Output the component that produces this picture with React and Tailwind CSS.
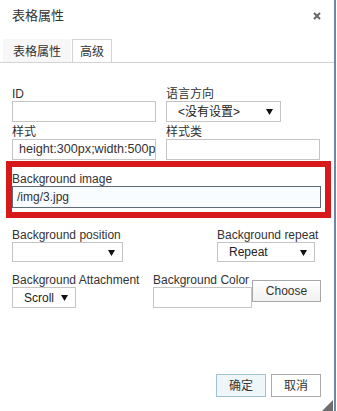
import React from "react";

function Caret() {
  return (
    <svg width="7" height="7" viewBox="0 0 7 7" className="shrink-0">
      <polygon points="0,1 7,1 3.5,7" fill="#111" />
    </svg>
  );
}

function Select({ value, className }) {
  return (
    <div
      className={
        "flex items-center justify-between border border-[#c4c4c4] bg-white pl-[11px] pr-[7px] text-[12px] leading-[14px] text-[#222] " +
        className
      }
    >
      <span>{value}</span>
      <Caret />
    </div>
  );
}

export default function App() {
  return (
    <div className="w-[337px] h-[411px] bg-white font-['Liberation_Sans','Noto_Sans_CJK_SC',sans-serif] text-[#333]">
      <div className="relative w-[336px] h-[411px] border-r-2 border-[#6f86a6] overflow-hidden">
        {/* Título */}
        <div className="flex h-[31px] items-center justify-between pl-[12px] pr-[13px]">
          <span className="text-[13px] leading-[16px] text-[#333]">表格属性</span>
          <svg width="8" height="8" viewBox="0 0 8 8">
            <path d="M1 1 L7 7 M7 1 L1 7" stroke="#666" strokeWidth="2" />
          </svg>
        </div>

        {/* Pestañas */}
        <div className="mt-[8px] flex h-[24px] border-b border-[#d3d3d3] text-[12px] leading-[14px]">
          <div className="ml-[3px] bg-[#f7f7f7] px-[10px] pt-[6px] text-[#333]">表格属性</div>
          <div className="ml-[1px] border border-b-0 border-[#d3d3d3] bg-white px-[7px] pt-[5px] text-[#333]">
            高级
          </div>
        </div>

        {/* ID / 语言方向 / 样式 / 样式类 */}
        <div className="mt-[24px] flex gap-[10px] px-[12px] text-[12px] leading-[14px]">
          <div className="flex w-[144px] flex-col">
            <span className="h-[14px]">ID</span>
            <div className="h-[21px] border border-[#c4c4c4] bg-white" />
            <span className="mt-[3px] h-[14px]">样式</span>
            <div className="h-[21px] overflow-hidden whitespace-nowrap border border-[#c4c4c4] bg-white pl-[6px] text-[12.6px] leading-[19px] text-[#333]">
              height:300px;width:500px
            </div>
          </div>
          <div className="flex flex-col">
            <span className="h-[14px]">语言方向</span>
            <Select value="<没有设置>" className="h-[21px] w-[115px]" />
            <span className="mt-[3px] h-[14px]">样式类</span>
            <div className="h-[21px] w-[154px] border border-[#c4c4c4] bg-white" />
          </div>
        </div>

        {/* Background image (resaltado) */}
        <div className="ml-[6px] mt-[1px] w-[325px] border-[6px] border-[#d7191c] pb-[4px] pr-[4px] pt-[5px] text-[12px] leading-[14px]">
          <span className="block h-[14px]">Background image</span>
          <div className="h-[22px] border border-[#5d6b77] bg-[#f8fcff] pl-[4px] leading-[20px] text-[#333]">
            /img/3.jpg
          </div>
        </div>

        {/* Background position / repeat */}
        <div className="mt-[10px] flex px-[12px] text-[12px] leading-[14px]">
          <div className="flex w-[111px] flex-col">
            <span className="h-[14px] whitespace-nowrap">Background position</span>
            <Select value="" className="h-[20px] w-[111px]" />
          </div>
          <div className="ml-[94px] flex flex-col">
            <span className="h-[14px] whitespace-nowrap">Background repeat</span>
            <Select value="Repeat" className="h-[20px] w-[98px]" />
          </div>
        </div>

        {/* Attachment / Color */}
        <div className="mt-[11px] flex px-[12px] text-[12px] leading-[14px]">
          <div className="flex w-[141px] flex-col">
            <span className="h-[14px] whitespace-nowrap">Background Attachment</span>
            <Select value="Scroll" className="h-[21px] w-[64px]" />
          </div>
          <div className="flex w-[99px] flex-col">
            <span className="h-[14px] whitespace-nowrap">Background Color</span>
            <div className="h-[21px] border border-[#c4c4c4] bg-white" />
          </div>
          <button className="mt-[7px] flex h-[22px] w-[69px] items-center justify-center border border-[#a9a9a9] bg-gradient-to-b from-white to-[#f1f1f1] text-[12px] text-[#333]">
            Choose
          </button>
        </div>

        {/* Botones */}
        <div className="mt-[66px] flex justify-end gap-[5px] pr-[13px] text-[12px]">
          <button className="flex h-[23px] w-[50px] items-center justify-center border border-[#9fc4cf] bg-[#eef6fa] text-[#333]">
            确定
          </button>
          <button className="flex h-[23px] w-[50px] items-center justify-center border border-[#ababab] bg-white text-[#333]">
            取消
          </button>
        </div>

        {/* Grip */}
        <svg width="11" height="11" viewBox="0 0 11 11" className="absolute bottom-0 right-[1px]">
          <polygon points="11,0 11,11 0,11" fill="#6d6d6d" />
        </svg>
      </div>
    </div>
  );
}
